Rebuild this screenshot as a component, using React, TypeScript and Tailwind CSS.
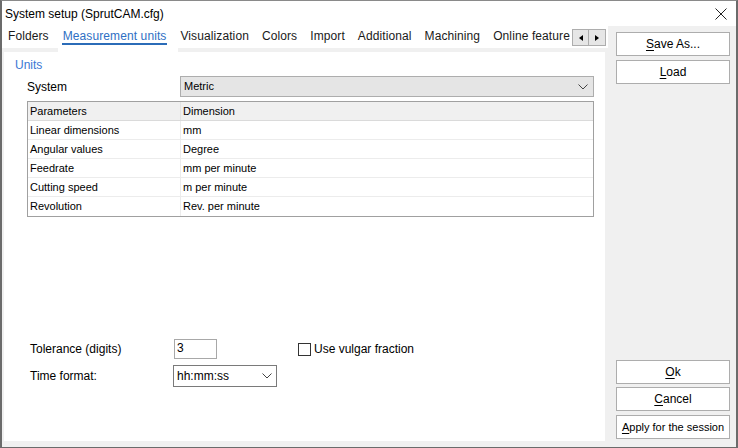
import React from 'react';

const TABS = ['Folders', 'Measurement units', 'Visualization', 'Colors', 'Import', 'Additional', 'Machining', 'Online features'];

const ROWS = [
  ['Linear dimensions', 'mm'],
  ['Angular values', 'Degree'],
  ['Feedrate', 'mm per minute'],
  ['Cutting speed', 'm per minute'],
  ['Revolution', 'Rev. per minute'],
];

function Chevron({ className }: { className?: string }) {
  return (
    <svg width="10" height="6" viewBox="0 0 10 6" className={className}>
      <path d="M0.5 0.5 L5 5 L9.5 0.5" fill="none" stroke="#444" strokeWidth="1" />
    </svg>
  );
}

function SideButton({ u, rest, small }: { u: string; rest: string; small?: boolean }) {
  return (
    <button
      className={`w-[114px] h-[24px] bg-white border border-[#adadad] text-[#000] flex items-center justify-center ${
        small ? 'text-[11px]' : 'text-[12px]'
      }`}
    >
      <span className="underline underline-offset-2">{u}</span>
      {rest}
    </button>
  );
}

export default function App() {
  return (
    <div
      className="w-[738px] h-[448px] flex flex-col bg-[#f0f0f0] border-t border-t-[#8a8a8a] border-x-2 border-x-[#6b6b6b] border-b border-b-[#6b6b6b] overflow-hidden"
      style={{ fontFamily: '"Liberation Sans", Arial, sans-serif' }}
    >
      {/* title bar */}
      <div className="h-[25px] shrink-0 bg-white flex items-center justify-between pl-[3px] pr-[9px]">
        <span className="text-[12px] text-black">System setup (SprutCAM.cfg)</span>
        <svg width="12" height="12" viewBox="0 0 12 12">
          <path d="M0.5 0.5 L11.5 11.5 M11.5 0.5 L0.5 11.5" stroke="#222" strokeWidth="1" />
        </svg>
      </div>

      <div className="flex flex-1 min-h-0">
        {/* left: tabs + page */}
        <div className="w-[606px] flex flex-col">
          <div className="h-[22px] bg-white flex items-stretch relative">
            <div className="flex items-stretch pl-[6px] gap-[13px] overflow-hidden w-[568px] whitespace-nowrap tracking-[0.1px]">
              {TABS.map((t, i) =>
                i === 1 ? (
                  <div key={t} className="relative flex items-center pb-[3px] text-[12px] text-[#2e6fc4] px-[1px] shrink-0">
                    {t}
                    <div className="absolute left-0 right-0 bottom-[3px] h-[2px] bg-[#2b6cb8]" />
                  </div>
                ) : (
                  <div key={t} className="flex items-center pb-[3px] text-[12px] text-[#1a1a1a] shrink-0">
                    {t}
                  </div>
                )
              )}
            </div>
            <div className="absolute right-[2px] top-[3px] flex">
              <div className="w-[17px] h-[17px] bg-[#e6e6e6] border border-[#adadad] flex items-center justify-center">
                <svg width="4" height="6" viewBox="0 0 4 6">
                  <path d="M4 0 L0 3 L4 6 Z" fill="#000" />
                </svg>
              </div>
              <div className="w-[17px] h-[17px] bg-[#e6e6e6] border border-l-0 border-[#adadad] flex items-center justify-center">
                <svg width="4" height="6" viewBox="0 0 4 6">
                  <path d="M0 0 L4 3 L0 6 Z" fill="#000" />
                </svg>
              </div>
            </div>
          </div>
          <div className="h-[4px] flex">
            <div className="w-[56px]" />
            <div className="w-[120px] bg-white" />
          </div>

          {/* page */}
          <div className="flex-1 ml-[2px] mb-[6px] w-[601px] bg-white flex flex-col text-black">
            <div className="mt-[6px] ml-[11px] text-[12px] leading-[14px] text-[#3a78d4]">Units</div>

            <div className="mt-[4px] ml-[23px] flex items-center">
              <span className="w-[153px] text-[12px]">System</span>
              <div className="w-[414px] h-[21px] bg-[#e5e5e5] border border-[#adadad] flex items-center justify-between pl-[3px] pr-[5px]">
                <span className="text-[11px]">Metric</span>
                <Chevron />
              </div>
            </div>

            <div className="mt-[4px] ml-[23px] w-[567px] border border-[#a0a0a0] text-[11px]">
              <div className="flex h-[19px] bg-[#f0f0f0] border-b border-[#dadada]">
                <div className="w-[153px] pl-[2px] flex items-center border-r border-[#e3e3e3]">Parameters</div>
                <div className="flex-1 pl-[2px] flex items-center">Dimension</div>
              </div>
              {ROWS.map(([a, b], i) => (
                <div
                  key={a}
                  className={`flex h-[19px] ${i < ROWS.length - 1 ? 'border-b border-[#ececec]' : ''}`}
                >
                  <div className="w-[153px] pl-[2px] flex items-center border-r border-[#ececec]">{a}</div>
                  <div className="flex-1 pl-[2px] flex items-center">{b}</div>
                </div>
              ))}
            </div>

            <div className="flex-1" />

            <div className="ml-[26px] flex items-center h-[20px]">
              <span className="w-[144px] text-[12px]">Tolerance (digits)</span>
              <div className="w-[43px] h-[20px] border border-[#a8a8a8] text-[12px] pl-[2px] leading-[16px]">3</div>
              <div className="ml-[81px] flex items-center gap-[3px]">
                <div className="w-[13px] h-[13px] border border-[#333]" />
                <span className="text-[12px]">Use vulgar fraction</span>
              </div>
            </div>

            <div className="mt-[6px] mb-[54px] ml-[26px] flex items-center h-[22px]">
              <span className="w-[143px] text-[12px]">Time format:</span>
              <div className="w-[104px] h-[22px] border border-[#7a7a7a] flex items-center justify-between pl-[3px] pr-[4px]">
                <span className="text-[12px]">hh:mm:ss</span>
                <Chevron />
              </div>
            </div>
          </div>
        </div>

        {/* right buttons */}
        <div className="flex-1 flex flex-col items-start pl-[8px] pt-[6px] pb-[8px]">
          <SideButton u="S" rest="ave As..." />
          <div className="mt-[4px]">
            <SideButton u="L" rest="oad" />
          </div>
          <div className="flex-1" />
          <SideButton u="O" rest="k" />
          <div className="mt-[3px]">
            <SideButton u="C" rest="ancel" />
          </div>
          <div className="mt-[4px]">
            <SideButton u="A" rest="pply for the session" small />
          </div>
        </div>
      </div>
    </div>
  );
}
